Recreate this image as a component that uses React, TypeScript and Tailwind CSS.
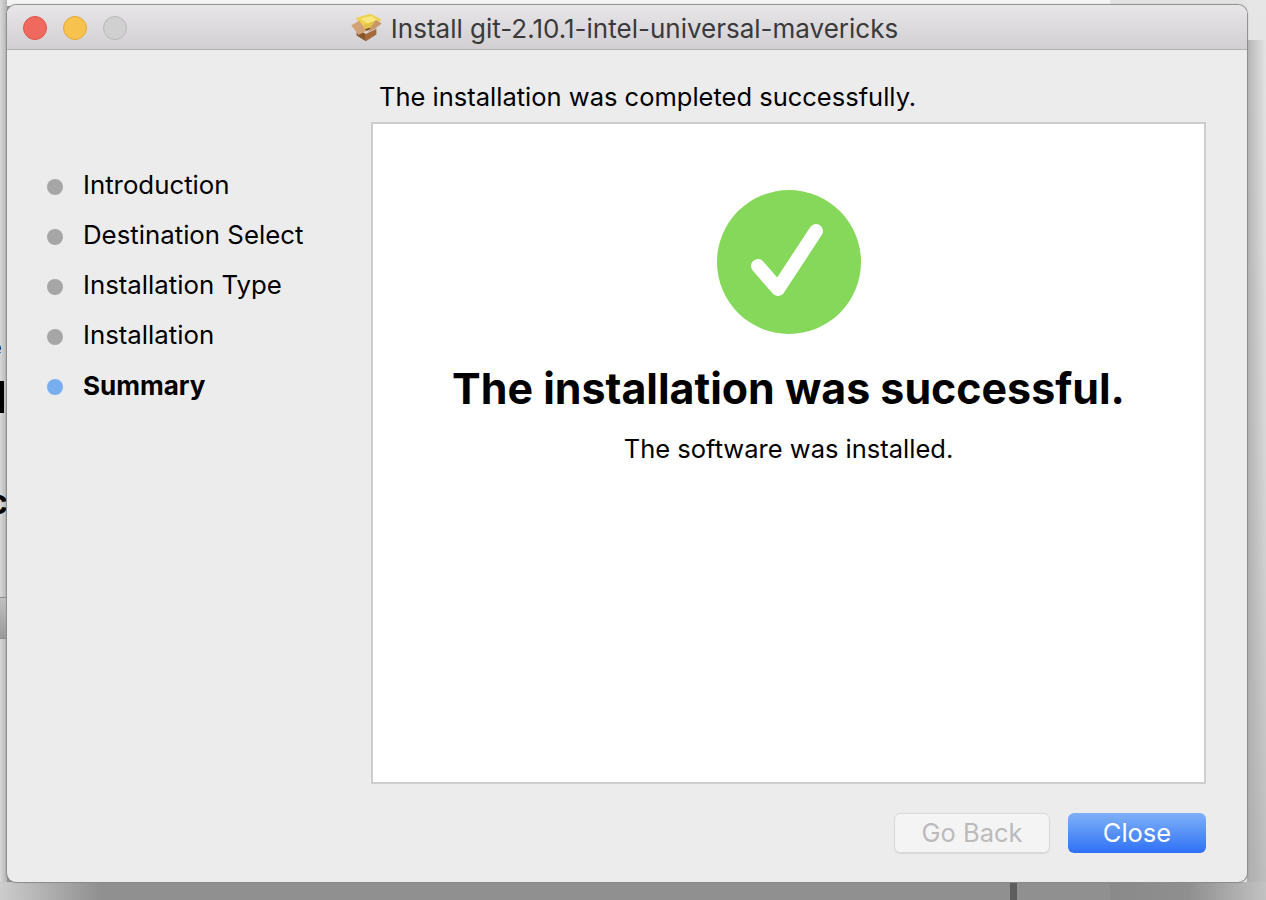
import React from "react";

const steps = ["Introduction", "Destination Select", "Installation Type", "Installation"];

function PackageIcon() {
  return (
    <svg width="31" height="29" viewBox="33 41 94 87" className="shrink-0">
      <polygon points="50,88 78,104 78,126 50,109" fill="#8a5429" />
      <polygon points="78,104 110,88 110,106 78,126" fill="#a5693a" />
      <polygon points="56,82 78,96 104,82 78,70" fill="#6e4521" />
      <polygon points="47,56 92,43 125,60 110,80 72,90" fill="#efd052" />
      <polygon points="62,58 94,50 112,62 82,72" fill="#f8e67f" />
      <polygon points="72,76 108,64 110,80 72,90" fill="#e2c24f" />
      <polygon points="34,78 58,64 80,94 56,107" fill="#d2a277" />
      <polygon points="126,72 108,62 84,98 106,88" fill="#c8966a" />
    </svg>
  );
}

export default function App() {
  return (
    <div className="relative w-[1266px] h-[900px] overflow-hidden bg-[#8f8f8f] [font-family:Inter,'Liberation_Sans',sans-serif]">
      {/* Desktop behind the window */}
      <div className="absolute left-0 top-0 w-[1110px] h-[6px] bg-[#f4f4f4]" />
      <div className="absolute left-[1110px] top-0 w-[156px] h-[900px] bg-[#e3e3e3]" />
      <div className="absolute left-[1247px] top-0 w-[19px] h-[900px] bg-gradient-to-b from-[#e6e6e6] via-[#d8d8d8] to-[#bdbdbd]" />
      <div className="absolute left-[1247px] top-[40px] w-[19px] h-[850px] bg-gradient-to-r from-[#a8a8a8]/80 to-transparent" />
      <div className="absolute left-0 top-0 w-[7px] h-[900px] bg-gradient-to-r from-[#d9d9d9] to-[#b4b4b4]" />
      <div className="absolute left-0 top-[597px] w-[7px] h-[42px] border-y border-[#8c8c8c] bg-gradient-to-b from-[#c0c0c0] to-[#9a9a9a]" />
      <div className="absolute left-0 top-[882px] w-[1110px] h-[18px] bg-gradient-to-r from-[#cdcdcd] via-[#909090] via-[9%] to-[#909090]" />
      <div className="absolute left-[1110px] top-[882px] w-[156px] h-[18px] bg-gradient-to-r from-[#8a8a8a] via-[#8f8f8f] to-[#c2c2c2]" />
      <div className="absolute left-[1010px] top-[882px] w-[7px] h-[18px] bg-[#5d5d5d]" />
      <span className="absolute left-[-11px] top-[332px] text-[22px] leading-[30px] text-black">e</span>
      <span className="absolute left-0 top-[381px] w-[4px] h-[32px] bg-black" />
      <span className="absolute left-[-12px] top-[484px] text-[34px] leading-[36px] font-bold text-black">c</span>

      {/* Window */}
      <div className="absolute left-[7px] top-[5px] w-[1240px] h-[877px] flex flex-col rounded-[9px] bg-[#ececec] overflow-hidden shadow-[0_0_1px_1px_#8a8a8a]">
        <div className="relative h-[45px] shrink-0 flex items-center justify-center gap-[9px] pr-[5px] border-b border-[#b3b1b3] bg-gradient-to-b from-[#e8e6e8] to-[#d1cfd1]">
          <div className="absolute left-[16px] top-[11px] flex gap-[16px]">
            <span className="w-[24px] h-[24px] rounded-full bg-[#f0695f] border border-[#de544b]" />
            <span className="w-[24px] h-[24px] rounded-full bg-[#f7c24e] border border-[#e2a93a]" />
            <span className="w-[24px] h-[24px] rounded-full bg-[#d0d0d0] border border-[#b8b8b8]" />
          </div>
          <PackageIcon />
          <span className="mt-[3px] text-[26px] leading-[32px] text-[#3a393b] whitespace-nowrap">Install git-2.10.1-intel-universal-mavericks</span>
        </div>

        <div className="flex-1 flex min-h-0">
          <ul className="w-[365px] shrink-0 pl-[40px] pt-[117px] flex flex-col gap-[14px]">
            {steps.map((s) => (
              <li key={s} className="flex items-center gap-[20px] h-[36px]">
                <span className="mt-[4px] w-[16px] h-[16px] rounded-full bg-[#a6a6a6]" />
                <span className="text-[25.8px] text-black whitespace-nowrap">{s}</span>
              </li>
            ))}
            <li className="flex items-center gap-[20px] h-[36px]">
              <span className="mt-[4px] w-[16px] h-[16px] rounded-full bg-[#78aeee]" />
              <span className="text-[26px] font-bold text-black whitespace-nowrap">Summary</span>
            </li>
          </ul>

          <div className="flex-1 flex flex-col pr-[41px] -ml-[1px]">
            <p className="h-[72px] shrink-0 pl-[8px] pt-[29px] text-[25.5px] leading-[36px] text-black whitespace-nowrap">The installation was completed successfully.</p>
            <div className="h-[662px] shrink-0 border-2 border-[#cdcdcd] bg-white flex flex-col items-center pt-[66px]">
              <svg width="144" height="144" viewBox="0 0 144 144">
                <circle cx="72" cy="72" r="72" fill="#85d85a" />
                <path d="M41 76 L61 99 L99 41" fill="none" stroke="#fff" strokeWidth="14" strokeLinecap="round" strokeLinejoin="round" />
              </svg>
              <h1 className="mt-[22px] text-[42.9px] leading-[64px] font-bold text-black whitespace-nowrap">The installation was successful.</h1>
              <p className="mt-[11px] text-[25.5px] leading-[36px] text-black whitespace-nowrap">The software was installed.</p>
            </div>
            <div className="flex-1 flex justify-end items-start gap-[18px] pt-[29px]">
              <button className="w-[156px] h-[40px] rounded-[6px] border border-[#d9d9d9] bg-[#f4f4f4] text-[25.5px] text-[#bcbaba] shadow-[0_1px_1px_rgba(0,0,0,0.08)]">Go Back</button>
              <button className="w-[138px] h-[40px] rounded-[6px] bg-gradient-to-b from-[#7fb0f6] to-[#2f6ff6] text-[25.5px] text-white">Close</button>
            </div>
          </div>
        </div>
      </div>
    </div>
  );
}
